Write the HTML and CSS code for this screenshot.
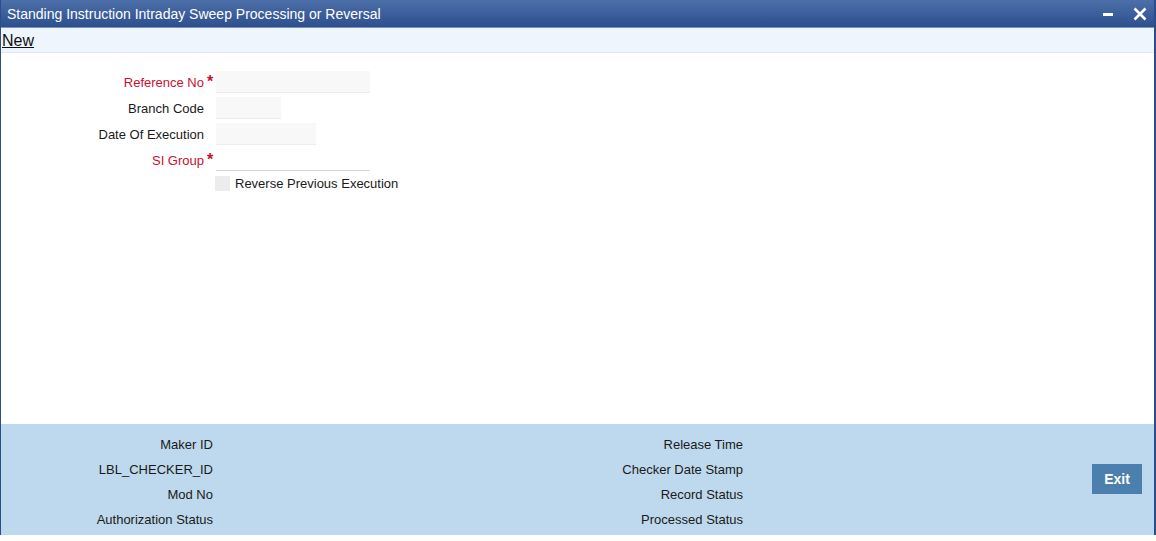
FILE: index.html
```html
<!doctype html>
<html>
  <head>
    <title>Standing Instruction Intraday Sweep Processing or Reversal</title>
    <link rel="stylesheet" href="styles.css">
  </head>
  <body>
    <div id="window">
      <div class="titlebar">
        <span class="title">Standing Instruction Intraday Sweep Processing or Reversal</span>
        <span class="winbtns">
          <svg width="12" height="12" viewBox="0 0 12 12"><rect x="0" y="5" width="10" height="3" fill="#fff"/></svg>
          <svg width="14" height="14" viewBox="0 0 14 14"><path d="M1.5 1.5 L12.5 12.5 M12.5 1.5 L1.5 12.5" stroke="#fff" stroke-width="2.6"/></svg>
        </span>
      </div>
      <div class="toolbar"><a href="#">New</a></div>
      <div class="form">
        <div class="row">
          <label class="req">Reference No</label><span class="star">*</span>
          <input class="fld w154" type="text">
        </div>
        <div class="row">
          <label>Branch Code</label><span class="star"></span>
          <input class="fld w65" type="text">
        </div>
        <div class="row">
          <label>Date Of Execution</label><span class="star"></span>
          <input class="fld w100" type="text">
        </div>
        <div class="row">
          <label class="req">SI Group</label><span class="star">*</span>
          <input class="fld w154 plain" type="text">
        </div>
        <div class="row chk">
          <span class="box"></span><span class="chklabel">Reverse Previous Execution</span>
        </div>
      </div>
      <div class="footer">
        <div class="col one">
          <div>Maker ID</div>
          <div>LBL_CHECKER_ID</div>
          <div>Mod No</div>
          <div>Authorization Status</div>
        </div>
        <div class="col two">
          <div>Release Time</div>
          <div>Checker Date Stamp</div>
          <div>Record Status</div>
          <div>Processed Status</div>
        </div>
        <button class="exit">Exit</button>
      </div>
    </div>
  </body>
</html>
```

FILE: styles.css
```css
* {
  margin: 0;
  padding: 0;
  box-sizing: border-box;
}

body {
  font-family: "Liberation Sans", Arial, sans-serif;
  font-size: 13px;
  color: #1a1a1a;
  background: #fff;
}

#window {
  width: 1156px;
  height: 535px;
  border-left: 1px solid #2b4d8c;
  border-right: 2px solid #2b4d8c;
  display: flex;
  flex-direction: column;
}

.titlebar {
  height: 28px;
  background: linear-gradient(#4c6fa9, #2d4f8e);
  display: flex;
  align-items: center;
  justify-content: space-between;
  padding: 0 7px 0 6px;
  border-bottom: 1px solid #7d95bd;
}
.title {
  color: #fff;
  font-size: 14px;
}
.winbtns {
  display: flex;
  align-items: center;
  gap: 18px;
}
.winbtns svg { display: block; }

.toolbar {
  height: 25px;
  background: #eef5fd;
  border-bottom: 1px solid #e2e4e8;
  padding: 1px 0 0 1px;
  display: flex;
  align-items: center;
}
.toolbar a {
  color: #111;
  font-size: 16px;
  text-decoration: underline;
}

.form {
  flex: 1;
  padding-top: 16px;
}
.row {
  display: flex;
  align-items: center;
  height: 26px;
}
.row label {
  width: 203px;
  text-align: right;
}
.row label.req { color: #c8102e; }
.star {
  width: 12px;
  color: #c8102e;
  font-size: 16px;
  font-weight: bold;
  text-align: center;
  align-self: flex-start;
  padding-top: 4px;
}
.fld {
  height: 22px;
  border: none;
  border-bottom: 1px solid #ececec;
  background: #f8f8f8;
  font-family: inherit;
}
.fld.plain {
  background: #fff;
  border-bottom: 1px solid #d8d8d8;
}
.w154 { width: 154px; }
.w65 { width: 65px; }
.w100 { width: 100px; }

.row.chk {
  height: 20px;
  padding-left: 214px;
}
.box {
  width: 15px;
  height: 15px;
  background: #ececec;
  margin-right: 5px;
}

.footer {
  height: 111px;
  background: #bed9ed;
  display: flex;
  padding-top: 8px;
}
.col div {
  height: 25px;
  line-height: 25px;
  text-align: right;
}
.col.one { width: 212px; }
.col.two { width: 530px; }
.exit {
  margin: 32px 0 0 349px;
  width: 50px;
  height: 30px;
  background: #4a7fae;
  color: #fff;
  border: none;
  font-family: inherit;
  font-weight: bold;
  font-size: 14px;
}
```
